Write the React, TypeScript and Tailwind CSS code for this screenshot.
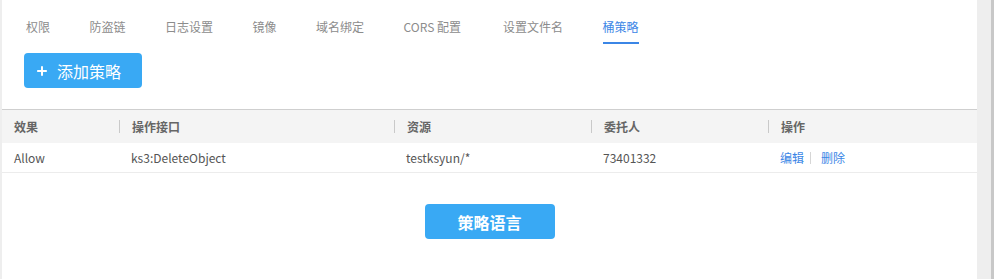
import { Plus } from 'lucide-react';

const tabs = ['权限', '防盗链', '日志设置', '镜像', '域名绑定', 'CORS 配置', '设置文件名', '桶策略'];

const columns = [
  { label: '效果', width: 'w-[117px]' },
  { label: '操作接口', width: 'w-[275px]' },
  { label: '资源', width: 'w-[197px]' },
  { label: '委托人', width: 'w-[177px]' },
  { label: '操作', width: 'flex-1' },
];

const font = { fontFamily: '"Noto Sans CJK SC", "Noto Sans", sans-serif' };

function Tabs() {
  return (
    <div className="flex gap-[39.5px] pl-[24px] pt-[17px] text-[12px]">
      {tabs.map((t, i) => {
        const active = i === tabs.length - 1;
        return (
          <div
            key={t}
            className={
              'pb-[5px] leading-[20px] border-b-2 ' +
              (t.startsWith('CORS') ? 'w-[60px] ' : '') +
              (active ? 'text-[#3b86e6] border-[#3b86e6]' : 'text-[#8c8c8c] border-transparent')
            }
          >
            {t}
          </div>
        );
      })}
    </div>
  );
}

function PolicyTable() {
  return (
    <div className="mt-[21px] border-t border-[#cfcfcf] text-[12px]">
      <div className="flex h-[33px] items-center bg-[#f4f4f4] font-semibold text-[#666]">
        {columns.map((c, i) => (
          <div key={c.label} className={c.width + ' flex items-center'}>
            {i > 0 ? <span className="h-[13px] w-px bg-[#c9c9c9]" /> : null}
            <span className="pl-[12px]">{c.label}</span>
          </div>
        ))}
      </div>
      <div className="flex h-[30px] items-center border-b border-[#ececec] text-[#555]">
        <div className="w-[117px] pl-[12px]">Allow</div>
        <div className="w-[275px] pl-[12px]">ks3:DeleteObject</div>
        <div className="w-[197px] pl-[12px]">testksyun/*</div>
        <div className="w-[177px] pl-[12px]">73401332</div>
        <div className="flex flex-1 items-center pl-[12px] text-[#3b86e6]">
          <span>编辑</span>
          <span className="ml-[6px] mr-[10px] h-[12px] w-px bg-[#d6d6d6]" />
          <span>删除</span>
        </div>
      </div>
    </div>
  );
}

function App() {
  return (
    <div className="flex h-[279px] w-[994px] bg-[#eeeeee]" style={font}>
      <div className="ml-[2px] w-[975px] bg-white">
        <Tabs />
        <button className="ml-[22px] mt-[9px] flex h-[35px] w-[118px] items-center rounded-[4px] bg-[#39a9f4] pl-[11px] text-[16px] text-white">
          <Plus size={14} strokeWidth={3.4} />
          <span className="ml-[8px]">添加策略</span>
        </button>
        <PolicyTable />
        <div className="mt-[31px] flex justify-center">
          <button className="h-[35px] w-[130px] rounded-[4px] bg-[#39a9f4] text-[16px] font-bold text-white">
            策略语言
          </button>
        </div>
      </div>
      <div className="w-[14px]" />
      <div className="w-[3px] bg-[#c8c8c8]" />
    </div>
  );
}

export default App;
